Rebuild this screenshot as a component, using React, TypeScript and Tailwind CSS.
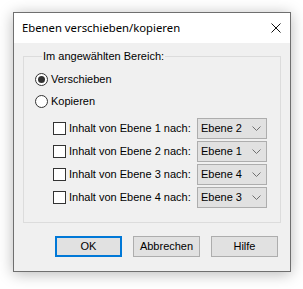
import { useState } from 'react';

const ROWS = [
  { n: 1, target: 'Ebene 2' },
  { n: 2, target: 'Ebene 1' },
  { n: 3, target: 'Ebene 4' },
  { n: 4, target: 'Ebene 3' },
];

function Radio({ checked, label, onClick }: { checked: boolean; label: string; onClick: () => void }) {
  return (
    <div className="h-[22px] flex items-center cursor-default" onClick={onClick}>
      <span className="w-[13px] h-[13px] rounded-full border border-[#333] bg-white flex items-center justify-center">
        {checked && <span className="w-[7px] h-[7px] rounded-full bg-[#333]" />}
      </span>
      <span className="ml-[3px]">{label}</span>
    </div>
  );
}

function Chevron() {
  return (
    <svg width="9" height="5" viewBox="0 0 9 5" className="shrink-0">
      <path d="M0.5 0.5 L4.5 4.5 L8.5 0.5" fill="none" stroke="#707070" strokeWidth="1" />
    </svg>
  );
}

export default function App() {
  const [mode, setMode] = useState<'move' | 'copy'>('move');
  const [checked, setChecked] = useState<number[]>([]);

  const toggle = (n: number) =>
    setChecked(c => (c.includes(n) ? c.filter(x => x !== n) : [...c, n]));

  return (
    <div className="min-h-screen bg-white pt-[12px] pl-[13px] text-[11px] text-black font-['Liberation_Sans',sans-serif]">
      <div className="w-[278px] h-[260px] border border-[#6f6f6f] bg-[#f0f0f0] shadow-[0_2px_14px_rgba(0,0,0,0.28)] flex flex-col">
        {/* title bar */}
        <div className="h-[30px] bg-white flex items-center pl-[8px] pr-[9px]">
          <span className="text-[11.3px] font-['Noto_Sans',sans-serif]">Ebenen verschieben/kopieren</span>
          <svg width="10" height="10" viewBox="0 0 10 10" className="ml-auto">
            <path d="M0.5 0.5 L9.5 9.5 M9.5 0.5 L0.5 9.5" stroke="#111" strokeWidth="1" />
          </svg>
        </div>

        <div className="px-[9px] pt-[7px]">
          <fieldset className="border border-[#dcdcdc] pl-[11px] pr-0 pb-[13px] m-0">
            <legend className="ml-[7px] px-[1px] leading-[13px]">Im angewählten Bereich:</legend>
            <div className="pt-[5px]">
              <Radio checked={mode === 'move'} label="Verschieben" onClick={() => setMode('move')} />
              <Radio checked={mode === 'copy'} label="Kopieren" onClick={() => setMode('copy')} />
            </div>
            <div className="mt-[5px] pl-[18px]">
              {ROWS.map(r => (
                <div key={r.n} className="h-[23px] flex items-center">
                  <span
                    className="w-[13px] h-[13px] border border-[#333] bg-white flex items-center justify-center shrink-0"
                    onClick={() => toggle(r.n)}
                  >
                    {checked.includes(r.n) && (
                      <svg width="9" height="9" viewBox="0 0 9 9">
                        <path d="M1 4.5 L3.5 7 L8 1.5" fill="none" stroke="#333" strokeWidth="1.4" />
                      </svg>
                    )}
                  </span>
                  <span className="ml-[3px] w-[128px] shrink-0">Inhalt von Ebene {r.n} nach:</span>
                  <div className="w-[70px] h-[21px] border border-[#adadad] bg-[#e1e1e1] flex items-center pl-[3px] pr-[5px]">
                    <span>{r.target}</span>
                    <span className="ml-auto">
                      <Chevron />
                    </span>
                  </div>
                </div>
              ))}
            </div>
          </fieldset>
        </div>

        <div className="mt-[13px] flex justify-end gap-[11px] pr-[12px]">
          <button className="w-[67px] h-[21px] border-2 border-[#0078d7] bg-[#e1e1e1]">OK</button>
          <button className="w-[67px] h-[21px] border border-[#adadad] bg-[#e1e1e1]">Abbrechen</button>
          <button className="w-[67px] h-[21px] border border-[#adadad] bg-[#e1e1e1]">Hilfe</button>
        </div>
      </div>
    </div>
  );
}
